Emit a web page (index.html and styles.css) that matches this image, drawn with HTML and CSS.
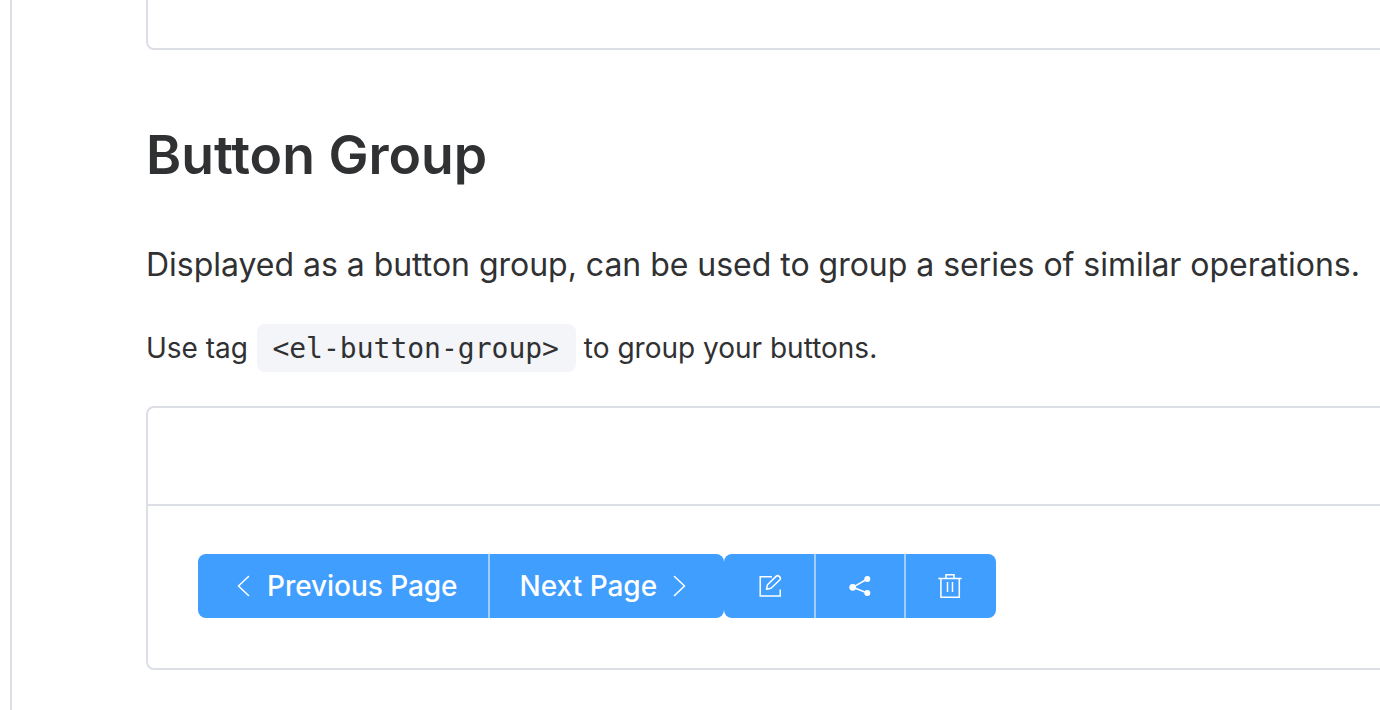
FILE: index.html
```html
<!DOCTYPE html>
<html lang="en">
<head>
<meta charset="utf-8">
<title>Button Group</title>
<link rel="stylesheet" href="styles.css">
</head>
<body>
<div class="page">
  <aside class="sidebar"></aside>
  <main class="content">
    <div class="prev-demo"></div>
    <h2 class="title">Button Group</h2>
    <p class="lead">Displayed as a button group, can be used to group a series of similar operations.</p>
    <p class="note">Use tag <code class="tag">&lt;el-button-group&gt;</code> to group your buttons.</p>
    <section class="demo">
      <div class="demo-head"></div>
      <div class="demo-body">
        <div class="group">
          <button class="btn btn-first btn-prev">
            <svg class="ico-arrow" viewBox="0 0 24 28" fill="none" stroke="currentColor" stroke-width="1.6" stroke-linecap="round" stroke-linejoin="round"><path d="M17.5 4.5 7.5 14l10 9.5"/></svg>
            <span>Previous Page</span>
          </button>
          <button class="btn btn-last btn-next">
            <span>Next Page</span>
            <svg class="ico-arrow" viewBox="0 0 24 28" fill="none" stroke="currentColor" stroke-width="1.6" stroke-linecap="round" stroke-linejoin="round"><path d="m7.5 4.5 10 9.5-10 9.5"/></svg>
          </button>
        </div>
        <div class="group">
          <button class="btn btn-icon btn-first" aria-label="Edit">
            <svg class="ico" viewBox="0 0 24 24" fill="none" stroke="currentColor" stroke-width="1.5"><path d="M15 2.7H3.200V22h20V15.500"/><path d="M9.500 15.200 10.500 10.700 19 2.400c.9-.9 2.300-.9 3.200 0l.5.5c.9.9.9 2.200 0 3.100L14 14.300z" stroke-linejoin="round"/></svg>
          </button>
          <button class="btn btn-icon" aria-label="Share">
            <svg class="ico" viewBox="0 0 24 24" fill="currentColor"><circle cx="4.700" cy="13.300" r="3.400"/><circle cx="19.300" cy="5" r="3"/><circle cx="19.300" cy="19" r="3"/><path d="M4.700 13.300 19.300 5M4.700 13.300 19.300 19" stroke="currentColor" stroke-width="1.500" fill="none"/></svg>
          </button>
          <button class="btn btn-icon btn-last" aria-label="Delete">
            <svg class="ico" viewBox="0 0 24 24" fill="none" stroke="currentColor" stroke-width="1.5"><path d="M-.7 4.500h23.400M7 4.500V.8h8v3.700M1.900 4.500v18.700h18.400V4.500M8.500 8v10M13.500 8v10"/></svg>
          </button>
        </div>
      </div>
    </section>
  </main>
</div>
</body>
</html>
```
FILE: styles.css
```css
* { box-sizing: border-box; }
html, body { margin: 0; padding: 0; height: 710px; overflow: hidden; background: #fff; }
body { font-family: Inter, "Liberation Sans", sans-serif; color: #303133; }
.page { display: flex; height: 710px; }
.sidebar { width: 12px; margin-right: 134px; border-right: 2px solid #dcdfe6; flex: none; }
.content { flex: 1; min-width: 0; }
.prev-demo { height: 50px; margin-right: -20px; border: 2px solid #dcdfe6; border-top: 0; border-radius: 0 0 8px 8px; }
.title { margin: 72px 0 0; font-size: 53.5px; line-height: 66px; font-weight: 600; color: #303133; }
.lead { margin: 55px 0 0; font-size: 32px; line-height: 44px; white-space: nowrap; font-weight: 400; letter-spacing: -.025px; }
.note { margin: 37px 0 0; height: 48px; font-size: 28px; line-height: 48px; white-space: nowrap; }
.tag { display: inline-block; margin: 0 0 0 1px; padding: 0 17px 0 15.5px; height: 48px; line-height: 50px; border-radius: 8px; background: #f4f5f9; font-family: "DejaVu Sans Mono", monospace; font-size: 28px; color: #303133; vertical-align: top; }
.demo { margin-top: 34px; margin-right: -20px; height: 264px; border: 2px solid #dcdfe6; border-radius: 8px; }
.demo-head { height: 98px; border-bottom: 2px solid #dcdfe6; }
.demo-body { display: flex; padding: 48px 50px; }
.group { display: flex; }
.btn { display: flex; align-items: center; justify-content: center; height: 64px; padding: 0 32px; border: 0; background: #409eff; color: #fff; font-family: inherit; font-size: 28px; font-weight: 500; gap: 12px; }
.btn + .btn { border-left: 2px solid rgba(255,255,255,.5); }
.btn-first { border-radius: 8px 0 0 8px; }
.btn-last { border-radius: 0 8px 8px 0; }
.btn-prev { padding: 0 30px 0 33px; letter-spacing: -.05px; }
.btn-next { padding: 0 33px 0 30px; gap: 10px; }
.btn-icon { padding: 0; width: 90px; }
.btn-icon + .btn-icon { width: 90px; }
.btn-icon + .btn-last { width: 92px; }
.ico { width: 24px; height: 24px; overflow: visible; }
.ico-arrow { width: 24px; height: 28px; }
```
